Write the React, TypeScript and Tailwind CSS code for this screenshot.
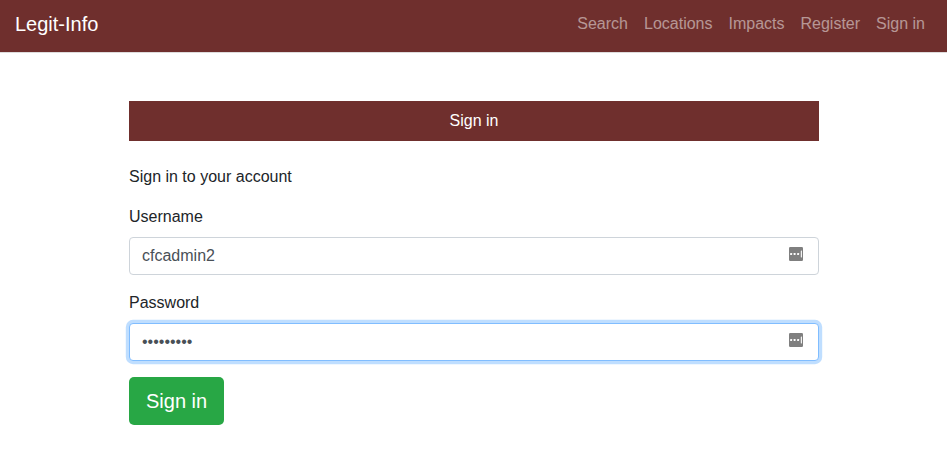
const navLinks = ["Search", "Locations", "Impacts", "Register", "Sign in"];

function FieldIcon() {
  return (
    <svg className="absolute right-4 top-[10px] h-[14px] w-[14px]" viewBox="0 0 14 14">
      <rect width="14" height="14" rx="1.2" fill="#7f7f7f" />
      <rect x="1.1" y="6" width="2" height="2" rx="0.4" fill="#fff" />
      <rect x="4.6" y="6" width="2" height="2" rx="0.4" fill="#fff" />
      <rect x="8.1" y="6" width="2" height="2" rx="0.4" fill="#fff" />
      <rect x="11.8" y="3.6" width="1.1" height="6.8" rx="0.3" fill="#fff" />
    </svg>
  );
}

export default function App() {
  return (
    <div className="min-h-[452px] bg-white font-['Liberation_Sans',Arial,sans-serif] text-base text-[#212529]">
      <nav className="flex h-[52px] items-start justify-between bg-[#6f2f2d] pl-[15px] pr-[22px] shadow-[0_1px_0_#dedcdc]">
        <a className="pt-[9px] text-xl leading-[30px] text-white">Legit-Info</a>
        <ul className="flex gap-4 pt-3 leading-6 text-white/50">
          {navLinks.map((label) => (
            <li key={label}>{label}</li>
          ))}
        </ul>
      </nav>
      <main className="ml-[129px] w-[690px] pt-[49px]">
        <h1 className="h-10 bg-[#6f2f2d] text-center leading-10 text-white">Sign in</h1>
        <form>
          <p className="mt-6 leading-6">Sign in to your account</p>
          <label className="mt-4 block leading-6" htmlFor="username">Username</label>
          <div className="relative mt-2">
            <input id="username" defaultValue="cfcadmin2" className="block h-[38px] w-full rounded border border-[#ced4da] bg-white px-3 leading-6 text-[#495057] outline-none" />
            <FieldIcon />
          </div>
          <label className="mt-4 block leading-6" htmlFor="password">Password</label>
          <div className="relative mt-2">
            <input id="password" type="password" defaultValue="legitinfo" className="block h-[38px] w-full rounded border border-[#80bdff] bg-white px-3 leading-6 text-[#495057] shadow-[0_0_0_3.2px_#bfdeff] outline-none" />
            <FieldIcon />
          </div>
          <button type="button" className="mt-4 block h-12 rounded-[5px] bg-[#28a745] px-[17px] text-xl leading-[30px] text-white">Sign in</button>
        </form>
      </main>
    </div>
  );
}
